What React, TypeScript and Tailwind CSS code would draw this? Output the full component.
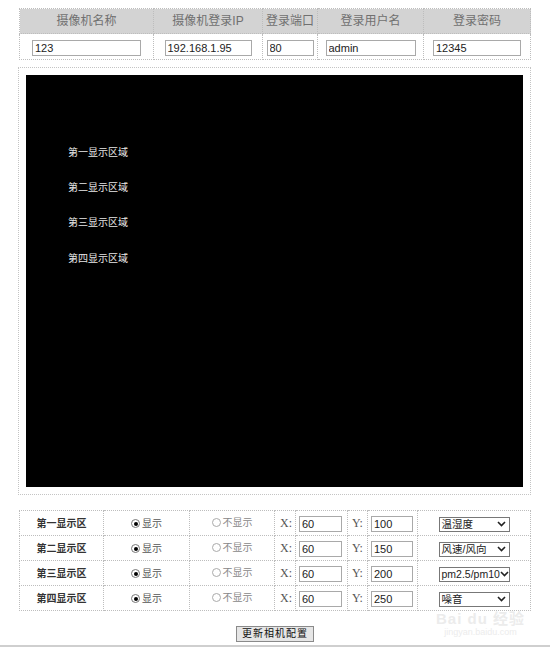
import React from "react";

const cjk = "font-['Liberation_Sans','Noto_Sans_CJK_SC',sans-serif]";

const headers = ["摄像机名称", "摄像机登录IP", "登录端口", "登录用户名", "登录密码"];
const values = [
  { v: "123", w: "w-[109px]" },
  { v: "192.168.1.95", w: "w-[87px]" },
  { v: "80", w: "w-[47px]" },
  { v: "admin", w: "w-[90px]" },
  { v: "12345", w: "w-[88px]" },
];

const zones = [
  { name: "第一显示区", y: "100", sel: "温湿度" },
  { name: "第二显示区", y: "150", sel: "风速/风向" },
  { name: "第三显示区", y: "200", sel: "pm2.5/pm10" },
  { name: "第四显示区", y: "250", sel: "噪音" },
];

const cell = "border border-dotted border-[#bdbdbd]";

function Radio({ on }: { on: boolean }) {
  return (
    <span
      className={
        "inline-flex h-[9px] w-[9px] items-center justify-center rounded-full border " +
        (on ? "border-[#777]" : "border-[#aaa]")
      }
    >
      {on && <span className="h-[4px] w-[4px] rounded-full bg-black" />}
    </span>
  );
}

function TextBox({ value, className }: { value: string; className: string }) {
  return (
    <input
      readOnly
      value={value}
      className={
        "h-[16px] border border-[#a9a9a9] bg-white px-[2px] text-[11px] leading-none text-[#222] outline-none font-['Liberation_Sans',sans-serif] " +
        className
      }
    />
  );
}

export default function App() {
  return (
    <div className={"relative h-[647px] w-[550px] overflow-hidden bg-white " + cjk}>
      {/* 摄像机参数 */}
      <table className="ml-[19px] mt-[8px] w-[511px] table-fixed border-collapse">
        <colgroup>
          <col className="w-[134px]" />
          <col className="w-[109px]" />
          <col className="w-[55px]" />
          <col className="w-[106px]" />
          <col className="w-[107px]" />
        </colgroup>
        <thead>
          <tr className="h-[25px] bg-[#d3d3d3]">
            {headers.map((h) => (
              <th key={h} className={cell + " text-center text-[12px] font-normal text-[#707070]"}>
                {h}
              </th>
            ))}
          </tr>
        </thead>
        <tbody>
          <tr className="h-[26px]">
            {values.map((c) => (
              <td key={c.v} className={cell + " text-center align-middle"}>
                <TextBox value={c.v} className={c.w} />
              </td>
            ))}
          </tr>
        </tbody>
      </table>

      {/* 预览区域 */}
      <div className="ml-[18px] mt-[7px] w-[513px] border border-dotted border-[#c4c4c4] p-[7px]">
        <div className="flex h-[412px] flex-col gap-[20px] bg-black pl-[42px] pt-[70px] text-[10px] leading-[15.2px] text-[#e8e8e8]">
          <span>第一显示区域</span>
          <span>第二显示区域</span>
          <span>第三显示区域</span>
          <span>第四显示区域</span>
        </div>
      </div>

      {/* 显示区设置 */}
      <table className="ml-[19px] mt-[15px] w-[511px] table-fixed border-collapse">
        <colgroup>
          <col className="w-[84px]" />
          <col className="w-[86px]" />
          <col className="w-[85px]" />
          <col className="w-[21px]" />
          <col className="w-[52px]" />
          <col className="w-[20px]" />
          <col className="w-[50px]" />
          <col className="w-[113px]" />
        </colgroup>
        <tbody>
          {zones.map((z) => (
            <tr key={z.name} className="h-[25px]">
              <td className={cell + " text-center text-[10px] font-bold text-[#333]"}>{z.name}</td>
              <td className={cell + " text-center text-[10px] text-[#555]"}>
                <span className="inline-flex items-center gap-[2px]">
                  <Radio on />
                  显示
                </span>
              </td>
              <td className={cell + " text-center text-[10px] text-[#888]"}>
                <span className="inline-flex items-center gap-[2px]">
                  <Radio on={false} />
                  不显示
                </span>
              </td>
              <td className={cell + " pl-[5px] text-[12px] text-[#555] font-['Liberation_Serif',serif]"}>X:</td>
              <td className={cell + " pl-[3px]"}>
                <TextBox value="60" className="w-[43px]" />
              </td>
              <td className={cell + " pl-[4px] text-[12px] text-[#555] font-['Liberation_Serif',serif]"}>Y:</td>
              <td className={cell + " pl-[3px]"}>
                <TextBox value={z.y} className="w-[42px]" />
              </td>
              <td className={cell + " text-center"}>
                <span className="inline-flex h-[15px] w-[71px] items-center justify-between border border-[#777] bg-white pl-[2px] pr-[3px] text-[10.5px] leading-none text-[#222]">
                  <span className="whitespace-nowrap">{z.sel}</span>
                  <svg width="9" height="6" viewBox="0 0 9 6" fill="none" className="shrink-0">
                    <path d="M1 1l3.5 3.5L8 1" stroke="#222" strokeWidth="1.6" />
                  </svg>
                </span>
              </td>
            </tr>
          ))}
        </tbody>
      </table>

      <div className="mt-[15px] flex justify-center">
        <button className="h-[16px] border border-[#8a8a8a] bg-[#e6e6e6] px-[5px] text-[10px] leading-none tracking-[1px] text-[#111]">
          更新相机配置
        </button>
      </div>

      <div className="absolute bottom-0 left-0 h-[2px] w-full bg-[#cfcfcf]" />

      {/* 水印 */}
      <div className="pointer-events-none absolute left-[436px] top-[611px] flex flex-col items-center leading-none text-[#ececec]">
        <span className="text-[15px] font-bold tracking-[1px]">Bai du 经验</span>
        <span className="mt-[2px] text-[9px] font-['Liberation_Sans',sans-serif]">jingyan.baidu.com</span>
      </div>
    </div>
  );
}
